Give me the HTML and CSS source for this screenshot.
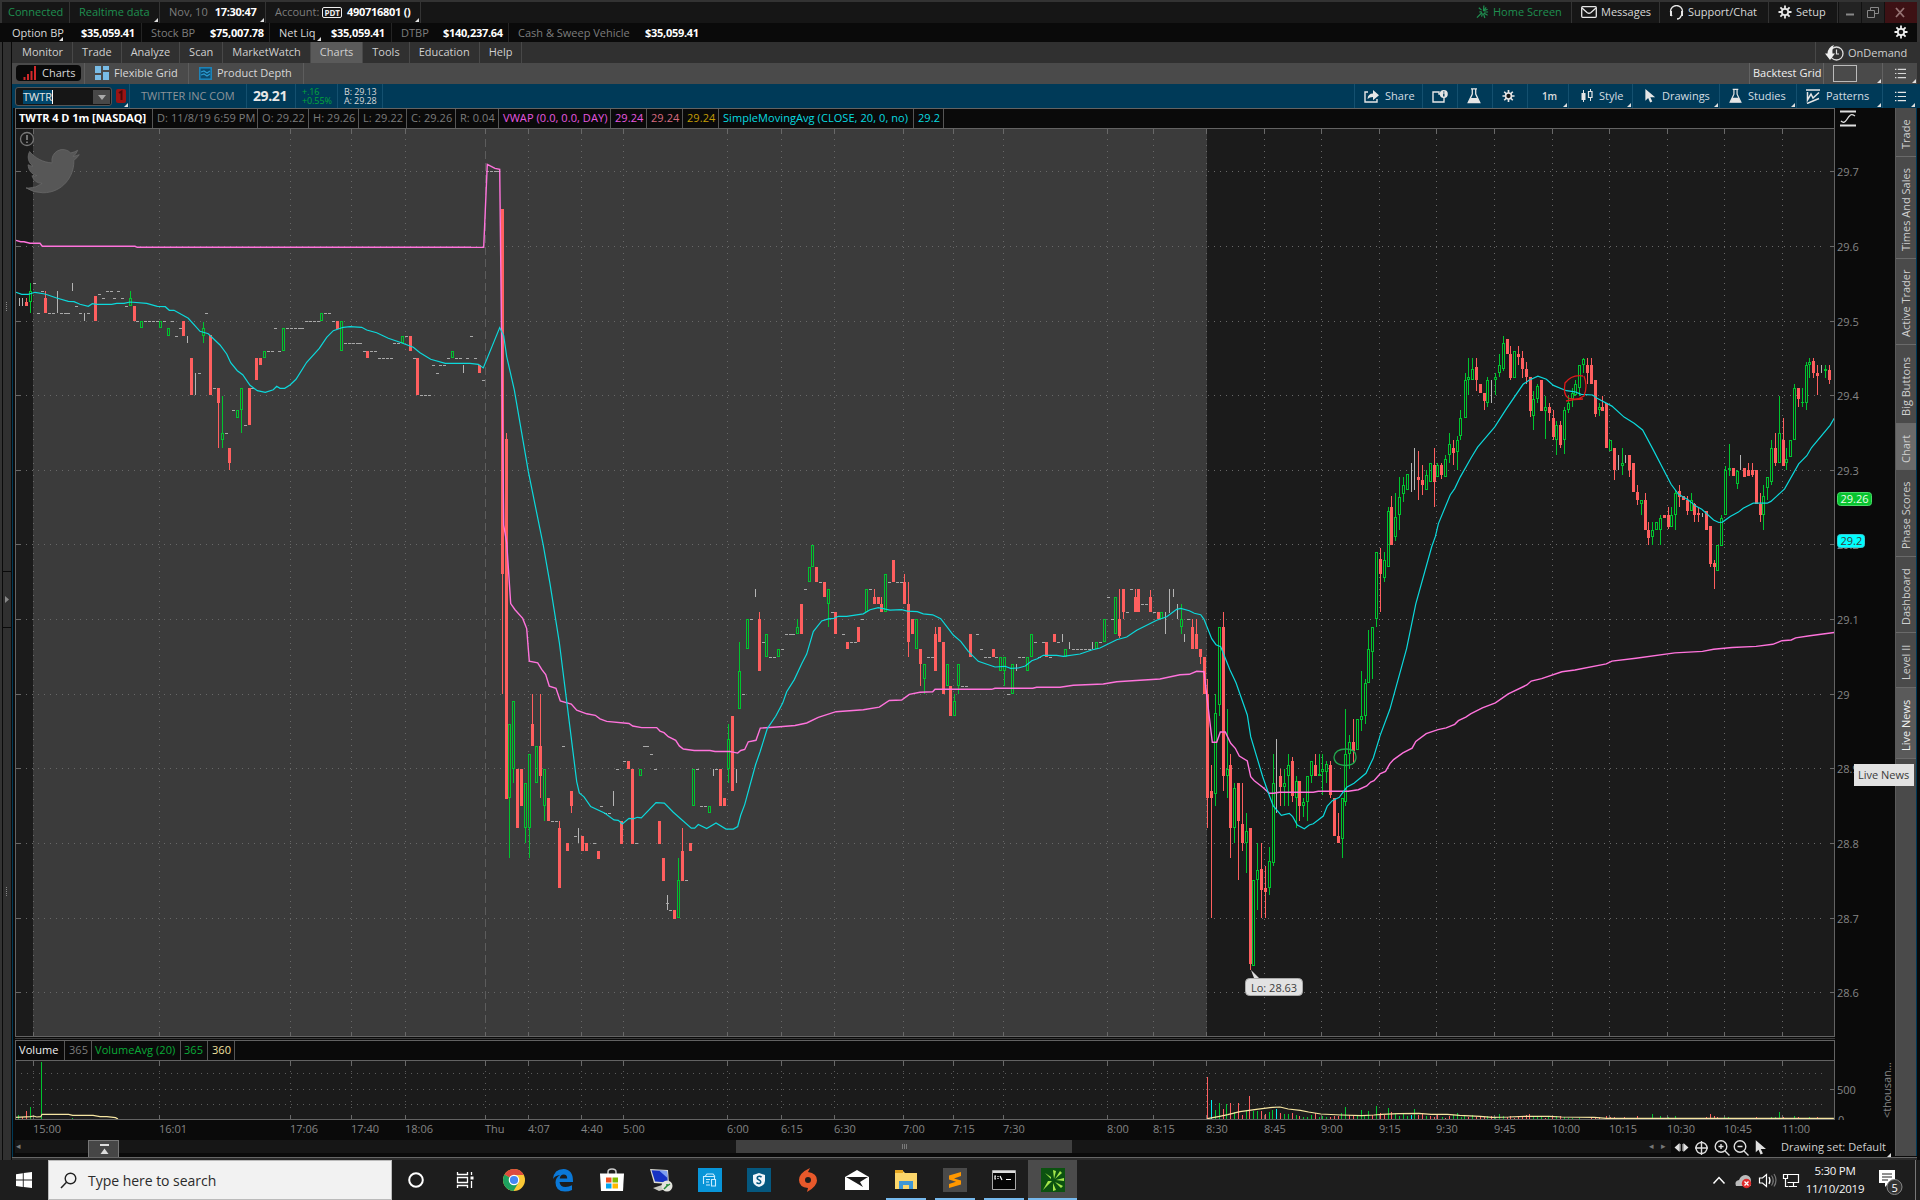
FILE: index.html
```html
<!DOCTYPE html>
<html lang="en">
<head>
<meta charset="utf-8">
<title>Charts - TWTR</title>
<link rel="stylesheet" href="styles.css">
</head>
<body>
<svg class="defs" width="0" height="0">
  <symbol id="gear" viewBox="0 0 14 14"><g stroke="currentColor" stroke-width="1.800"><path d="M7 .5v13M.5 7h13M2.400 2.400l9.200 9.200M11.600 2.400l-9.200 9.200"/></g><circle cx="7" cy="7" r="4" fill="currentColor"/><circle class="hole" cx="7" cy="7" r="2.300"/></symbol>
  <symbol id="flask" viewBox="0 0 14 16"><path d="M4 .8h6M5.300 1v5L1.200 14.600h11.600L8.700 6V1" fill="none" stroke="currentColor" stroke-width="1.300"/><path d="M3.600 10h6.800l2.200 4.600H1.400z" fill="currentColor"/></symbol>
  <symbol id="list" viewBox="0 0 12 12"><path d="M0 1.500h1.500M3 1.500h9M0 6h1.500M3 6h9M0 10.500h1.500M3 10.500h9" stroke="currentColor" stroke-width="1.200"/></symbol>
  <symbol id="pointer" viewBox="0 0 11 15"><path d="M0 0v12.500l3-2.800 2.100 4.800 2.300-1-2.100-4.600H10.500z" fill="currentColor"/></symbol>
  <symbol id="burst" viewBox="0 0 14 14"><path d="M8 6L8.500 0M8 6l3-4M8 6l4.500-2M9 7h4M8.500 8l4 2.500M8 8.500l1.500 5M7 8.500L6 12M6.500 7.500L1 13M6 6.500L3.500 7M6 5L3 2.500" fill="none" stroke="currentColor" stroke-width="1.300"/></symbol>
</svg>
<div class="app">
  <header class="bar status">
    <span class="cell green" style="width:68px">Connected</span>
    <span class="cell green corner" style="width:90px">Realtime data</span>
    <span class="cell dim corner" style="width:106px">Nov, 10 <b>17:30:47</b></span>
    <span class="cell dim corner" style="width:155px">Account: <i class="pdt">PDT</i><b>490716801 ()</b></span>
    <span class="spacer"></span>
    <span class="cell green hs" style="width:107px"><svg class="ic" width="13" height="14"><use href="#burst"/></svg>Home Screen</span>
    <span class="cell" style="width:88px"><svg class="ic" width="16" height="12" viewBox="0 0 16 12"><rect x=".7" y=".7" width="14.600" height="10.600" rx="1" fill="none" stroke="#e6e6e6" stroke-width="1.300"/><path d="M1 2l5 4.500q2 1.500 4 0L15 2" fill="none" stroke="#e6e6e6" stroke-width="1.300"/></svg>Messages</span>
    <span class="cell" style="width:109px"><svg class="ic" width="15" height="15" viewBox="0 0 15 15"><path d="M3 11Q1.500 9 1.500 6.500a6 6 0 0 1 12 0Q13.500 9 12 11M12 11q-1 3-4 3" fill="none" stroke="#e6e6e6" stroke-width="1.300"/><path d="M1 6h2v5H1zM12 6h2v5h-2z" fill="#e6e6e6"/></svg>Support/Chat</span>
    <span class="cell" style="width:69px"><svg class="ic" width="14" height="14"><use href="#gear"/></svg>Setup</span>
    <span class="win"><svg width="22" height="21"><path d="M7 12.500h8" stroke="#888" stroke-width="2"/></svg></span>
    <span class="win"><svg width="22" height="21"><path d="M5.500 8.500h7v7h-7zM8.500 8V5.500h8v6H13" fill="none" stroke="#888"/></svg></span>
    <span class="win close"><svg width="32" height="21"><path d="M11 6l8 9M19 6l-8 9" stroke="#957373" stroke-width="1.800"/></svg></span>
  </header>
  <div class="bar balance">
    <span class="cell corner2" style="width:139px"><em style="width:69px">Option BP</em><b>$35,059.41</b></span>
    <span class="cell dim" style="width:128px"><em style="width:59px">Stock BP</em><b>$75,007.78</b></span>
    <span class="cell corner2" style="width:122px"><em style="width:52px">Net Liq</em><b>$35,059.41</b></span>
    <span class="cell dim" style="width:117px"><em style="width:42px">DTBP</em><b>$140,237.64</b></span>
    <span class="cell dim last"><em style="width:127px">Cash &amp; Sweep Vehicle</em><b>$35,059.41</b></span>
    <span class="spacer"></span>
    <svg class="cog" width="14" height="14"><use href="#gear"/></svg>
  </div>
  <nav class="bar menu">
    <a>Monitor</a><a>Trade</a><a>Analyze</a><a>Scan</a><a>MarketWatch</a><a class="on">Charts</a><a>Tools</a><a>Education</a><a>Help</a>
    <span class="spacer"></span>
    <span class="demand"><svg width="19" height="16" viewBox="0 0 19 16"><circle cx="11.500" cy="8.500" r="6.500" fill="none" stroke="#ddd" stroke-width="1.300"/><path d="M11.500 4.500V9H14" fill="none" stroke="#ddd" stroke-width="1.200"/><path d="M9 0Q3 2 2.500 8.500H0L5 15l5-6.500H7.500Q7 3 9 0z" fill="#eee"/></svg>OnDemand</span>
  </nav>
  <nav class="bar sub">
    <span class="pilltab"><span class="pill"><svg width="14" height="14" viewBox="0 0 14 14"><path d="M1.500 14v-3M5 14V8M8.500 14V5M12 14V0" stroke="#d2282a" stroke-width="2"/></svg>Charts</span></span>
    <span class="subtab" style="width:104px"><svg width="14" height="14" viewBox="0 0 14 14"><path d="M0 0h6v7H0zM0 9h6v5H0zM8 0h6v4H8zM8 6h6v8H8z" fill="#79bce6"/></svg>Flexible Grid</span>
    <span class="subtab pd" style="width:115px"><svg width="13" height="13" viewBox="0 0 13 13"><rect x=".8" y=".8" width="11.400" height="11.400" fill="#0c4a6d" stroke="#1d83b8" stroke-width="1.600"/><path d="M2 5l3-1 3 2 3-2M2 8l3-1 3 2 3-2" fill="none" stroke="#2b9ad0" stroke-width="1.300"/></svg>Product Depth</span>
    <span class="spacer"></span>
    <span class="grid-name">Backtest Grid</span>
    <span class="grid-box corner"><svg width="24" height="17"><rect x=".5" y=".5" width="23" height="16" fill="none" stroke="#bbb"/></svg></span>
    <span class="grid-list corner"><svg width="11" height="11"><use href="#list"/></svg></span>
  </nav>
  <div class="bar symbol">
    <span class="sym"><i>TWTR</i><s></s></span>
    <span class="link corner"><svg width="10" height="14"><rect width="10" height="14" rx="2" fill="#9a1414"/><path d="M3 4l2.500-1.500V11" fill="none" stroke="#4a0808" stroke-width="2"/></svg></span>
    <span class="q name" style="width:117px">TWITTER INC COM</span>
    <span class="q last" style="width:49px">29.21</span>
    <span class="q two up" style="width:42px">+.16<br>+0.55%</span>
    <span class="q two" style="width:45px">B: 29.13<br>A: 29.28</span>
    <span class="spacer"></span>
    <span class="t" style="width:68px"><svg width="15" height="13" viewBox="0 0 15 13"><path d="M4 2H1v10h12V9" fill="none" stroke="#e6e6e6" stroke-width="1.400"/><path d="M3.500 9Q4 3.500 9 3.500V0l6 5.300-6 5V7Q5.500 7 3.500 9z" fill="#e6e6e6"/></svg>Share</span>
    <span class="t" style="width:35px"><svg width="16" height="13" viewBox="0 0 16 13"><path d="M1 2h6v2h5v8H1z" fill="none" stroke="#e6e6e6" stroke-width="1.400"/><circle cx="11.800" cy="4" r="4" fill="#e6e6e6"/><path d="M11.800 1.500v1M11.800 3.500v3" stroke="#003a58" stroke-width="1.400"/></svg></span>
    <span class="t" style="width:35px"><svg width="14" height="16"><use href="#flask"/></svg></span>
    <span class="t" style="width:35px"><svg width="13" height="14"><use href="#gear"/></svg></span>
    <span class="t corner m1" style="width:41px"><b>1m</b></span>
    <span class="t corner st" style="width:64px"><svg width="12" height="14" viewBox="0 0 12 14"><path d="M2.500 1v12M9.500 0v2M9.500 9v3" stroke="#e6e6e6"/><path d="M.5 4h4v7h-4z" fill="#e6e6e6"/><path d="M7.500 2.500h3.500v6H7.500z" fill="none" stroke="#e6e6e6" stroke-width="1.200"/></svg>Style</span>
    <span class="t corner" style="width:87px;padding-left:12px"><svg width="11" height="14"><use href="#pointer"/></svg>Drawings</span>
    <span class="t corner" style="width:77px"><svg width="13" height="16"><use href="#flask"/></svg>Studies</span>
    <span class="t corner" style="width:86px"><svg width="14" height="15" viewBox="0 0 14 15"><path d="M0 1h14M1.500 3v8L5 5l2 4 6-5.500M1 14.500l12-5" fill="none" stroke="#e6e6e6" stroke-width="1.500"/></svg>Patterns</span>
    <span class="t corner" style="width:34px;padding-left:12px"><svg width="11" height="11"><use href="#list"/></svg></span>
  </div>
  <main class="work">
    <div class="gutter"><svg width="11" height="1050"><path d="M3 463.500h8M3 519.500h8" stroke="#0a0a0a"/><path d="M5 488l4 3.500-4 3.500z" fill="#888"/><path d="M6.500 194v9M6.500 779v9" stroke="#888" stroke-dasharray="1 1"/></svg></div>
    <section class="chart">
      <div class="studies">
        <div class="labels">
          <b style="width:137px">TWTR 4 D 1m [NASDAQ]</b><span style="width:105px">D: 11/8/19 6:59 PM</span><span style="width:51px">O: 29.22</span><span style="width:50px">H: 29.26</span><span style="width:48px">L: 29.22</span><span style="width:49px">C: 29.26</span><span style="width:43px">R: 0.04</span><span class="mag" style="width:112px">VWAP (0.0, 0.0, DAY)</span><span class="mag" style="width:36px">29.24</span><span class="pink" style="width:36px">29.24</span><span class="gold" style="width:36px">29.24</span><span class="cy" style="width:195px">SimpleMovingAvg (CLOSE, 20, 0, no)</span><span class="cy" style="width:30px">29.2</span>
        </div>
        <svg class="scale" width="16" height="17" viewBox="0 0 16 17"><path d="M0 1.500h16M0 15.500h16" stroke="#e0e0e0" stroke-width="2"/><path d="M1 11q3 3 5.500-1t4-5 4.500 1" fill="none" stroke="#ddd" stroke-width="1.300"/></svg>
      </div>
      <svg class="plot" width="1880" height="912" viewBox="15 128 1880 912">
        <rect x="15" y="128" width="1820" height="909" fill="#1b1b1b"/>
        <rect x="33" y="128" width="1174" height="909" fill="#3b3b3b"/>
        <g id="price-grid"></g>
        <g class="mark"><circle cx="27" cy="139" r="6.500" fill="none" stroke="#777" stroke-width="1.300"/><path d="M27 135v5M27 141.500v1.500" stroke="#888" stroke-width="1.600"/></g>
        <path transform="translate(26 144.500) scale(2.220)" fill="#575757" stroke="#696969" stroke-width=".35" d="M23.953 4.570a10 10 0 01-2.825.775 4.958 4.958 0 002.163-2.723c-.951.555-2.005.959-3.127 1.184a4.920 4.920 0 00-8.384 4.482C7.690 8.095 4.067 6.130 1.640 3.162a4.822 4.822 0 00-.666 2.475c0 1.710.870 3.213 2.188 4.096a4.904 4.904 0 01-2.228-.616v.060a4.923 4.923 0 003.946 4.827 4.996 4.996 0 01-2.212.085 4.936 4.936 0 004.604 3.417 9.867 9.867 0 01-6.102 2.105c-.390 0-.779-.023-1.170-.067a13.995 13.995 0 007.557 2.209c9.053 0 13.998-7.496 13.998-13.985 0-.210 0-.420-.015-.630A9.935 9.935 0 0024 4.590z"/>
        <g id="candles" shape-rendering="crispEdges"></g>
        <g id="overlays"></g>
        <path d="M1334 757q1-8 12-8 10 0 10 8 0 8-10 8.500-12-.5-12-8.500" fill="none" stroke="#22a84f" stroke-width="1.300"/>
        <path d="M1583 376q-11-2-18 7-2 12 3 15 9 3 16-2 4-10 0-20M1566 401q8-2 17-2" fill="none" stroke="#e01a1a" stroke-width="1.300"/>
        <path d="M1251 970l3 8h5z" fill="#ddd"/>
        <rect x="1245.500" y="978.500" width="57" height="17" rx="4" fill="#e2e2e2" stroke="#aaa"/>
        <text x="1251" y="992" class="lo">Lo: 28.63</text>
        <path d="M15.500 128v909M1834.500 128v909M15 128.500h1820M15 1036.500h1820" stroke="#636363"/>
        <path d="M15 1038.500h1820" stroke="#3a3a3a"/>
        <g id="price-labels"></g>
        <rect x="1837.500" y="492.500" width="34" height="13" rx="3" fill="#07c42f" stroke="#49d968"/><text x="1840.500" y="503" class="tagw">29.26</text>
        <rect x="1837.500" y="534.500" width="27" height="13" rx="3" fill="#00ffff" stroke="#35c9d0"/><text x="1840.500" y="545" class="tagd">29.2</text>
      </svg>
      <div class="studies vol">
        <div class="labels"><span class="wh" style="width:49px">Volume</span><span style="width:27px">365</span><span class="gr" style="width:89px">VolumeAvg (20)</span><span class="gr" style="width:27px">365</span><span class="cream" style="width:27px">360</span></div>
      </div>
      <svg class="plot" width="1880" height="80" viewBox="15 1060 1880 80">
        <rect x="15" y="1060" width="1820" height="59" fill="#1b1b1b"/>
        <g id="volume-grid"></g>
        <g id="bars" shape-rendering="crispEdges"></g>
        <g id="average"></g>
        <path d="M15.500 1060v60M1834.500 1060v60M15 1060.500h1820M15 1119.500h1820" stroke="#636363"/>
        <g id="time-labels"></g>
        <text x="1837" y="1094" class="ax">500</text>
        <svg x="1836" y="1114" width="20" height="6" viewBox="1836 1114 20 6"><text x="1838" y="1124" class="ax">0</text></svg>
        <text class="ax" transform="translate(1891 1118) rotate(-90)" textLength="56">&lt;thousan...</text>
      </svg>
      <div class="scroll">
        <div class="track"><i class="arr">◂</i><i class="thumb"></i><i class="up"><svg width="9" height="11"><path d="M0 1h9" stroke="#ddd" stroke-width="2"/><path d="M4.500 4.500L8.500 10h-8z" fill="#ddd"/></svg></i><i class="arr r">◂</i><i class="arr r2">▸</i></div>
        <svg class="tools" width="96" height="17" viewBox="1673 1139 96 17"><g fill="none" stroke="#dedede" stroke-width="1.400"><path d="M1680 1143v7M1683 1143v7" stroke-width="1"/><circle cx="1701.500" cy="1147" r="5.500"/><path d="M1695 1147h13M1701.500 1140v14"/><circle cx="1721" cy="1145.500" r="5.800"/><path d="M1725 1150l4.500 4.500M1718.500 1145.500h5M1721 1143v5"/><circle cx="1740" cy="1145.500" r="5.800"/><path d="M1744 1150l4.500 4.500M1737.500 1145.500h5"/></g><path d="M1674.500 1146.500l5-4.500v9zM1688.500 1146.500l-5-4.500v9z" fill="#dedede"/><use href="#pointer" x="1755.500" y="1139" width="11" height="15"/></svg>
        <span class="dset">Drawing set: Default</span>
      </div>
      <div class="foot"></div>
    </section>
    <aside class="side">
      <a style="height:49px">Trade</a><a style="height:102px">Times And Sales</a><a style="height:86px">Active Trader</a><a style="height:79px">Big Buttons</a><a class="on" style="height:46px">Chart</a><a style="height:87px">Phase Scores</a><a style="height:76px">Dashboard</a><a style="height:55px">Level II</a><a class="hot" style="height:71px">Live News</a>
    </aside>
    <div class="tip">Live News</div>
  </main>
  <footer class="task">
    <svg class="start" width="16" height="16" viewBox="0 0 16 16"><path d="M0 2.200l6.800-1v6.400H0zM7.700 1.100L16 0v7.600H7.700zM0 8.500h6.800v6.400L0 14zM7.700 8.500H16V16l-8.300-1.100z" fill="#fff"/></svg>
    <div class="search"><svg width="17" height="17" viewBox="0 0 17 17"><circle cx="10.500" cy="6.500" r="5.300" fill="none" stroke="#222" stroke-width="1.400"/><path d="M6.500 10.300L1 16" stroke="#222" stroke-width="1.500"/></svg>Type here to search</div>
    <div class="apps">
      <span><svg width="24" height="24"><circle cx="12" cy="12" r="6.800" fill="none" stroke="#fff" stroke-width="2"/></svg></span>
      <span><svg width="24" height="24"><path d="M4.500 4v2.500h10V4M4.500 20v-2.500h10V20M4.500 9.500h10v5h-10zM18.500 4v3M18.500 13v7" fill="none" stroke="#fff" stroke-width="1.300"/><path d="M17.500 8.500h3v3h-3z" fill="#fff"/></svg></span>
      <span class="ch"><svg width="24" height="24" viewBox="0 0 24 24"><circle cx="12" cy="12" r="11" fill="#fbc835"/><path d="M12 12L2.500 6.500A11 11 0 0 1 21.800 7H12z" fill="#dd4b3e"/><path d="M12 12l4.500 2.500L11.500 23A11 11 0 0 1 2.500 6.500z" fill="#1da15f"/><circle cx="12" cy="12" r="5.300" fill="#fff"/><circle cx="12" cy="12" r="4.100" fill="#4587f3"/></svg></span>
      <span><svg width="22" height="24" viewBox="0 0 22 24"><path d="M1 11Q2 1 11.500 1 21 1.500 21 13v1H7.500q.5 5 6 5 3.500 0 6.500-1.700V22q-3 1.500-7 1.500-9.500 0-9.500-9Q3.500 9.500 8 7 3 7.500 1 11zM7.700 10.500h7.500q0-4-3.500-4-3.300 0-4 4z" fill="#0a78d7"/></svg></span>
      <span><svg width="24" height="24" viewBox="0 0 24 24"><path d="M8 6V4q0-3 4-3t4 3v2" fill="none" stroke="#ccc" stroke-width="1.500"/><path d="M0 5.500h24L23 23H1z" fill="#fff"/><path d="M6 9.500h5.500v5H6z" fill="#f25022"/><path d="M12.500 9.500H18v5h-5.500z" fill="#7fba00"/><path d="M6 15.500h5.500v5H6z" fill="#00a4ef"/><path d="M12.500 15.500H18v5h-5.500z" fill="#ffb900"/></svg></span>
      <span><svg width="24" height="24" viewBox="0 0 24 24"><path d="M1 1l18 1 1 14-15-1z" fill="#dcdcd4"/><path d="M2.500 2.200L18 3l.8 11.500L6 13.500z" fill="#1733c4"/><path d="M10 2.600l8 .4.500 7z" fill="#7d9df0"/><path d="M4 20l9-3 4 4-7 2z" fill="#c8c8c0"/><circle cx="18" cy="18" r="5.500" fill="#e3e3dd"/><path d="M15 21l3-3v-2M18 18l3-2" fill="none" stroke="#248a36" stroke-width="1.500"/></svg></span>
      <span><svg width="24" height="24" viewBox="0 0 24 24"><path d="M0 0h24v24H0z" fill="#0895d8"/><path d="M7 8.500L9 6h6l2 2.500M5.500 16V8.500h11v3M8 11.500h4M8 14h3M8 17h4M13.500 11.500h4v6.500h-4z" fill="none" stroke="#c8ecff" stroke-width="1.100"/></svg></span>
      <span><svg width="24" height="24" viewBox="0 0 24 24"><path d="M0 0h24v24H0z" fill="#05587f"/><path d="M12 5l6 2v6q0 4-6 6-6-2-6-6V7z" fill="#f0f6fa"/><path d="M14.500 9.300q-1-1.300-3-.8-2 .8-1 2.500l2.500 1.500q1.500 1.500 0 2.700-2 .9-3.500-.7" fill="none" stroke="#05587f" stroke-width="1.500"/></svg></span>
      <span><svg width="20" height="24" viewBox="0 0 20 24"><path d="M12 0l-2 4q9 1 9 8.500 0 6-10 11.500l1-4Q1 19 1 12 1 5 12 0z" fill="#e8592b"/><circle cx="10" cy="12" r="3" fill="#1e1e1e"/></svg></span>
      <span><svg width="24" height="20" viewBox="0 0 24 20"><path d="M0 7l12-7 12 7v13H0z" fill="#fff"/><path d="M1 7h22l-8 5 3 5-5-3z" fill="#1b1b1b"/></svg></span>
      <span class="run"><svg width="24" height="22" viewBox="0 0 24 22"><path d="M1 2h8l2 2h12v16H1z" fill="#fbd66b"/><path d="M1 1h8v3H1z" fill="#e6a620"/><path d="M5 12h14v8h-4v-4h-6v4H5z" fill="#3f97d6"/></svg></span>
      <span class="run"><svg width="24" height="24" viewBox="0 0 24 24"><path d="M0 0h24v24H0z" fill="#4a4a4a"/><path d="M6 7.500L18 4v4l-7 2.500 7 2V16.500L6 20v-4l7-2.300-7-2.200z" fill="#ff9800"/></svg></span>
      <span class="run"><svg width="24" height="20" viewBox="0 0 24 20"><path d="M.5.500h23v19H.5z" fill="#050505" stroke="#aaa"/><path d="M1 1h22v2H1z" fill="#ddd"/><path d="M4 6H3v3h1M6 6v1M6 8v1M8 6l2 4M14 9.500h5" fill="none" stroke="#fff" stroke-width="1.200"/></svg></span>
      <span class="run act"><svg width="24" height="24" viewBox="0 0 24 24"><path d="M0 0h24v24H0z" fill="#0c5210"/><path d="M13 11L12 2l3 1zM14 11l5-8 2 2zM15 12l8-2v3zM14 14l8 4-2 2zM12 15l3 7-3 1zM11 13L2 22l5-9zM10 11L4 5l6 4z" fill="#a5e84b"/></svg></span>
    </div>
    <span class="spacer"></span>
    <svg class="tray" width="96" height="24" viewBox="1712 1168 96 24"><path d="M1713.500 1183.500l5.500-6 5.500 6" fill="none" stroke="#fff" stroke-width="1.500"/><path d="M1736 1186q-2-5 3-6 2-5 7-5 5 1 5 6v5z" fill="#bbb"/><circle cx="1746.500" cy="1183.500" r="4.700" fill="#e02b2b"/><path d="M1744.500 1181.500l4 4M1748.500 1181.500l-4 4" stroke="#fff" stroke-width="1.300"/><path d="M1759.500 1178h3l4-3.500v12l-4-3.500h-3z" fill="none" stroke="#fff" stroke-width="1.200"/><path d="M1769 1177q2 3.500 0 7" fill="none" stroke="#fff" stroke-width="1.200"/><path d="M1771.500 1175.500q3.500 5 0 10M1774 1174q4 6 0 12.500" fill="none" stroke="#777" stroke-width="1.200"/><path d="M1787.500 1174.500h11v8h-11M1783.500 1174.500h4v4h-4zM1785.500 1178v8.500h3M1793.500 1183v3M1789 1186.500h8" fill="none" stroke="#fff" stroke-width="1.200"/></svg>
    <div class="clock">5:30 PM<br>11/10/2019</div>
    <svg class="note" width="24" height="26" viewBox="0 0 24 26"><path d="M0 0h16v13h-6l-4 4v-4H0z" fill="#fff"/><path d="M3 4h10M3 7h10M3 10h6" stroke="#222"/><circle cx="15.500" cy="17" r="7.500" fill="#333" stroke="#888"/><text x="12.600" y="21.500" class="n5">5</text></svg>
    <i class="desk"></i>
  </footer>
</div>
<script src="chart.js"></script>
</body>
</html>
```
FILE: styles.css
```css
* { box-sizing: border-box; }
html, body { margin: 0; background: #0a0a0a; }
body { width: 1920px; height: 1200px; overflow: hidden; font: 11px/14px "Open Sans", "Noto Sans", sans-serif; color: #d8d8d8; }
i, em { font-style: normal; }
.defs { position: absolute; }
.app { display: flex; flex-direction: column; height: 1200px; }
.bar { display: flex; align-items: stretch; flex: none; white-space: nowrap; }
.spacer { flex: 1; }
.green { color: #1f8f50; }
.dim { color: #7d7d7d; }
b { color: #fff; letter-spacing: -.28px; }
.corner, .corner2 { position: relative; }
.corner::after, .corner2::after, .dset::after { content: ""; position: absolute; right: 1px; bottom: 1px; border: 2px solid; border-color: transparent #e0e0e0 #e0e0e0 transparent; }
.corner2::after { left: 47px; right: auto; }
.balance .corner2:nth-child(1)::after { left: 56px; }

.status { height: 23px; background: #161616; border: solid #333; border-width: 2px 3px 0 2px; }
.cell { display: flex; align-items: center; flex: none; border-right: 1px solid #333; }
.status .cell { padding-left: 9px; padding-bottom: 1px; }
.status .cell:first-child { padding-left: 6px; }
.status .cell b { margin-left: 7px; }
.status .cell i + b { margin-left: 5px; }
.pdt { border: 1px solid #eee; border-radius: 2px; color: #eee; font-size: 8px; font-weight: bold; line-height: 9px; padding: 0 1px; margin-left: 3px; }
.ic { margin-right: 4px; flex: none; color: #e6e6e6; }
.hs .ic { color: #1f8f50; margin-left: 2px; }
.hole { fill: #161616; }
.win { width: 23px; flex: none; background: #232323; border-left: 1px solid #111; }
.win.close { width: 33px; background: #3d1114; }
.win svg { display: block; }

.balance { height: 19px; background: #0a0a0a; padding-left: 3px; border-right: 3px solid #333; }
.balance .cell { padding-left: 9px; border-color: #242424; }
.balance .cell.last { border: 0; }
.balance em { flex: none; }
.cog { margin: 2px 9px 0 0; color: #f0f0f0; }

.menu, .sub, .symbol { background-image: linear-gradient(90deg, #333 2px, #0a0a0a 2px 3px, #303030 3px 11px, #0a0a0a 11px 12px); background-size: 12px 100%; background-repeat: no-repeat; }
.menu { height: 21px; background-color: #303030; padding-left: 12px; border-right: 3px solid #303030; color: #cfcfcf; }
.menu a { padding: 3px 9px; border-right: 1px solid #484848; }
.menu a:first-child { padding-left: 10px; }
.menu a.on { background: #5a5a5a; }
.demand { display: flex; align-items: center; gap: 4px; width: 102px; padding-left: 9px; border-left: 1px solid #484848; }

.sub { height: 21px; background-color: #4a4a4a; padding-left: 12px; border-right: 3px solid #303030; }
.pilltab { width: 73px; border-right: 1px solid #5d5d5d; padding: 2px 0 0 4px; }
.pill { display: flex; align-items: center; width: 65px; height: 16px; border-radius: 4px; background: #090909; padding-left: 7px; gap: 5px; }
.subtab { display: flex; align-items: center; padding: 0 0 1px 10px; gap: 5px; border-right: 1px solid #5d5d5d; }
.grid-name { width: 75px; padding: 3px 0 0 3px; border: solid #626262; border-width: 0 1px; color: #efefef; }
.grid-box { width: 59px; padding: 2px 0 0 9px; border-right: 1px solid #626262; }
.grid-list { width: 34px; padding: 5px 0 0 12px; }

.symbol { height: 24px; background-color: #003a58; padding: 0 4px 0 15px; }
.sym { display: flex; width: 97px; height: 19px; margin-top: 3px; background: #161616; border: 1px solid #555; border-radius: 3px; padding: 2px 1px 1px 7px; justify-content: space-between; }
.sym i { background: #00466b; border-right: 1px solid #fff; height: 14px; color: #e6e6e6; }
.sym s { width: 17px; background: #484848; display: flex; }
.sym s::before { content: ""; margin: 5px 5px; border: 4px solid transparent; border-top: 5px solid #aaa; border-bottom: 0; }
.link { width: 18px; padding: 5px 0 0 4px; border-right: 1px solid #14506f; }
.q { display: flex; align-items: center; flex: none; border-right: 1px solid #14506f; padding-left: 7px; }
.name { padding-left: 11px; color: #8d9499; }
.q.last { font: bold 14px/20px "Open Sans", sans-serif; color: #e8e8e8; letter-spacing: -.4px; padding-left: 6px; }
.q.two { font-size: 9px; line-height: 9px; letter-spacing: -.1px; padding-left: 6px; }
.q.up { color: #05a63a; }
.t { display: flex; align-items: center; gap: 6px; flex: none; border-left: 1px solid #14506f; padding-left: 9px; color: #d4dde2; }
.t svg { color: #e6e6e6; }
.t .hole { fill: #003a58; }
.m1 { padding-left: 14px; font-size: 10px; }
.m1 b { color: #ddd; font-weight: 600; }
.st { padding-left: 12px; }

.work { display: flex; height: 1052px; flex: none; position: relative; }
.gutter { width: 15px; background: linear-gradient(90deg, #333 2px, #0a0a0a 2px 3px, #303030 3px 11px, #0a0a0a 11px 12px, #003a58 12px 13px, #0a0a0a 13px); }
.chart { width: 1880px; display: flex; flex-direction: column; }
.studies { display: flex; height: 20px; flex: none; }
.labels { display: flex; width: 1820px; border: 1px solid #636363; border-bottom: 0; color: #7c7c7c; white-space: nowrap; letter-spacing: .07px; }
.labels > * { border-right: 1px solid #555; padding: 2px 0 0 4px; flex: none; }
.labels b { letter-spacing: -.04px; padding-left: 3px; }
.labels .wh, .labels .gr { padding-left: 3px; }
.scale { margin: 2px 0 0 5px; }
.mag { color: #e858e0; } .pink { color: #d86b80; } .gold { color: #c39c05; } .cy { color: #08dbe0; } .wh { color: #f0f0f0; } .gr { color: #0aab38; } .cream { color: #f2e2a0; }
.plot { display: block; flex: none; }
.ax { fill: #858585; font-size: 11px; }
.lo, .tagd { fill: #3c3c3c; font-size: 11px; }
.tagw { fill: #e8ffe8; font-size: 11px; }

.scroll { display: flex; height: 17px; }
.track { position: relative; width: 1656px; height: 13px; background: #161616; }
.arr { position: absolute; left: 1px; top: -1px; color: #777; font-size: 9px; }
.arr.r { left: 1634px; } .arr.r2 { left: 1646px; }
.thumb { position: absolute; left: 721px; width: 336px; height: 13px; background: #404040; }
.thumb::after { content: ""; position: absolute; left: 166px; top: 4px; width: 5px; height: 5px; background: repeating-linear-gradient(90deg, #7a7a7a 0 1px, transparent 1px 2px); }
.track .up { position: absolute; left: 73px; width: 31px; height: 17px; background: #464646; border: 1px solid #777; border-bottom: 0; padding: 3px 0 0 11px; line-height: 0; }
.tools { margin-left: 2px; color: #dedede; }
.dset { position: relative; width: 126px; padding-left: 12px; white-space: nowrap; color: #d0d0d0; letter-spacing: .05px; }
.dset::after { right: 4px; bottom: 0; }
.foot { height: 3px; margin-left: -3px; width: 1905px; border-top: 1px solid #666; background: #2b2b2b; }

.side { display: flex; flex-direction: column; width: 22px; height: 1048px; background: #4a4a4a; border-right: 1px solid #003a58; border-left: 1px solid #5b5b5b; }
.side a { display: flex; align-items: center; justify-content: center; writing-mode: vertical-rl; transform: rotate(180deg); width: 20px; border-top: 1px solid #6a6a6a; padding-bottom: 4px; color: #cfcfcf; flex: none; }
.side .on { background: #6b6b6b; }
.side .hot { background: #5a5a5a; color: #f0f0f0; }
.tip { position: absolute; left: 1854px; top: 656px; width: 60px; height: 22px; background: #e2e2e2; color: #3b3b3b; padding: 4px; white-space: nowrap; }

.task { display: flex; align-items: center; height: 40px; background: #1d1d1d; }
.start { margin: 0 16px; flex: none; }
.search { display: flex; align-items: center; gap: 11px; width: 344px; height: 40px; background: #f2f2f2; border: 1px solid #bbb; padding: 1px 0 0 11px; color: #2b2b2b; font-size: 14px; letter-spacing: -.03px; }
.apps { display: flex; height: 40px; margin-left: -1px; }
.apps span { width: 49px; display: flex; align-items: center; justify-content: center; }
.apps .run { background: linear-gradient(#76b9ed, #76b9ed) 50% 100%/40px 2px no-repeat; }
.apps .act { background: linear-gradient(#76b9ed, #76b9ed) 0 100%/49px 2px no-repeat, #4b4b4b; }
.tray { margin-right: -5px; }
.clock { width: 64px; text-align: center; font-size: 11.500px; line-height: 18px; letter-spacing: -.25px; color: #f5f5f5; }
.note { margin: 6px 0 0 12px; }
.n5 { fill: #fff; font-size: 11px; }
.desk { width: 1px; height: 40px; background: #777; margin: 0 4px 0 12px; }
```
FILE: chart.js
```js
const NS = 'http://www.w3.org/2000/svg';
const add = (id, tag, attrs, text) => {
  const e = document.createElementNS(NS, tag);
  for (const k in attrs) e.setAttribute(k, attrs[k]);
  if (text) e.textContent = text;
  document.getElementById(id).appendChild(e);
};
const COLOR = { r: '#ff5f5f', g: '#00c42f', w: '#b4b4b4', c: '#00f0f0' };

// Session segments. Each has an origin, a scale, and its own bar and line records.
// r/g: x bodyTop bodyBottom [high low]   w: x high low   d: y x x x ...
const segments = [
{ x: 0, y: 200, sx: 3, sy: 3,
  bars: 'w 58 294 320;w 67 294 320;r 79 306 320 296 320;g 91 274 307 250 340;d 250 103;d 340 115 148 160 184 196 206 241 265 619 976 988;d 274 127 322 334 355;r 136 294 341 274 341;w 172 274 340;w 217 250 275;d 319 229 379;w 253 340 365;r 286 289 365;d 283 298;d 295 310 343 367;g 391 295 320 274 320;r 403 319 365;d 364 412 436 448 460 472 493 517 919 931 943 955 1000;g 424 364 386;g 481 364 386;g 505 385 410;d 409 529 1219 1414;d 385 541 826 862 874 886 897 907;r 550 364 410;w 562 409 430;r 574 475 587;w 586 520 585;d 520 598 1312;g 610 385 410 366 430;r 631 407 587;d 565 643 757;r 655 565 611 565 745;g 667 700 722 588 745;d 700 679;r 688 745 791 745 810;d 631 700;g 712 631 656;g 724 565 631 565 700;d 676 736;r 748 565 677;r 769 475 542;r 781 475 497;g 793 454 475;d 454 805 817 838 1093 1114 1126;g 850 385 455;g 964 340 364;r 1012 364 388;g 1024 364 455;d 430 1036 1048 1060 1072 1082 1183 1195;r 1102 454 476;d 475 1138 1150 1162 1174 1243 1345 1369 1381 1402 1426;g 1207 409 430;r 1231 409 455;r 1252 475 587;d 586 1264 1276 1288;d 496 1300 1321 1333;g 1357 454 475;w 1390 496 520;r 1438 496 521',
  sma: '48,277 65,283 85,283 105,277 135,282 170,294 205,304 222,305 240,313 265,319 277,311 290,313 335,313 350,310 372,310 390,306 440,310 472,319 496,320 508,331 522,331 565,355 600,394 625,401 660,435 680,462 692,488 712,512 728,524 750,556 772,572 796,577 820,569 830,559 840,565 854,565 870,555 888,538 920,487 958,445 980,412 1000,392 1030,382 1050,380 1085,382 1100,390 1130,398 1165,415 1200,427 1240,442 1260,458 1292,478 1336,490 1410,490',
  vwap: '48,121 62,125 72,125 90,130 120,130 127,139 405,139 412,142 1410,142' },
{ x: 470, y: 150, sx: 3, sy: 1.96,
  bars: 'd 366 4;d 409 16;r 28 422 438;d 452 40;d 42 52 64 76 86;r 97 116 832 116 1067;r 109 568 1272 555 1272;g 118 1126 1271 1126 1388;g 130 1080 1214 1080 1242;r 142 1214 1330;r 154 1214 1287;g 166 1242 1330 1242 1358;g 178 1185 1330 1185 1388;r 187 1125 1169 1067 1169;g 199 1169 1242;r 211 1168 1228 1067 1270;g 223 1214 1287 1214 1315;r 235 1270 1316;d 1316 247 259;r 268 1329 1447 1316 1447;d 1169 280 523 532;r 292 1358 1375;r 304 1256 1287 1256 1300;d 1346 316;w 325 1330 1358;r 337 1345 1375;r 349 1358 1375;d 1358 373 499;r 385 1374 1390;d 1287 394 694 706;d 1300 406 418;w 430 1256 1287;d 1214 442 556 682 740;r 454 1315 1360;d 1198 463;r 475 1198 1214;r 487 1214 1360;g 511 1214 1228;d 1185 544;r 568 1315 1360;r 580 1388 1433;w 592 1461 1491;d 1476 592;d 1491 601;r 613 1490 1507;g 625 1432 1506 1388 1506;r 637 1374 1433 1330 1433;d 1432 649;r 661 1358 1375;g 670 1214 1287;g 718 1287 1300;w 730 1214 1228;r 751 1214 1287;r 763 1270 1287;g 775 1155 1214 1126 1242;r 787 1109 1257;w 799 1214 1242;g 808 1022 1097 965 1097;d 1067 820;g 832 920 979;d 920 844 1177;w 856 861 877;r 868 920 1022 906 1022;d 965 880 1144 1156;g 889 950 995;d 995 901 913 1375 1387;g 925 979 995;d 979 937;d 950 949 961 970 1120;g 982 935 950 920 950;r 994 891 950;d 861 1006 1201;g 1018 818 848;g 1027 774 818;r 1039 818 848;d 848 1051 1258 1282 1294;r 1063 848 877;g 1075 861 891 861 935;d 906 1087;r 1096 906 950;r 1132 965 979;r 1165 935 965;g 1189 861 906;r 1213 877 891 861 891;r 1225 877 891;r 1234 891 906 877 906;g 1246 832 906;r 1270 804 848;r 1303 848 891 832 891;r 1315 891 965 848 995;r 1327 920 950;g 1339 920 979;r 1351 979 1008 979 1052;g 1363 1008 1038 1008 1066;r 1396 950 1022 935 1022;r 1408 935 965;r 1420 965 1067;g 1432 1008 1052',
  sma: '0,418 25,420 40,427 89,348 101,364 110,405 133,470 175,630 220,775 240,850 268,965 292,1090 320,1238 328,1260 342,1268 362,1287 405,1300 432,1313 445,1314 457,1321 477,1310 490,1311 502,1308 514,1309 558,1279 583,1280 610,1298 664,1329 674,1329 685,1322 710,1330 738,1319 768,1331 790,1331 803,1326 812,1304 824,1283 857,1204 870,1180 892,1134 917,1110 938,1084 950,1062 973,1038 995,1007 1010,988 1030,944 1055,923 1075,919 1092,918 1105,914 1130,914 1180,909 1200,901 1225,897 1260,902 1295,901 1312,904 1342,905 1360,909 1388,911 1411,918',
  vwap: '0,191 41,191 52,28 75,36 89,38 101,735 110,770 122,889 135,901 158,918 170,938 178,1002 203,1005 215,1018 227,1028 238,1051 258,1055 271,1080 304,1086 320,1098 350,1105 376,1108 390,1115 410,1120 477,1124 488,1129 515,1132 560,1132 570,1139 582,1142 595,1150 617,1157 628,1168 640,1174 673,1177 720,1177 735,1179 780,1179 803,1182 812,1177 824,1175 835,1160 858,1157 871,1133 920,1131 975,1128 1010,1123 1045,1112 1098,1101 1180,1097 1228,1092 1258,1079 1295,1078 1318,1067 1350,1063 1388,1062' },
{ x: 900, y: 520, sx: 3, sy: 3,
  bars: 'r 151 499 590;g 163 544 590 523 590;g 175 433 499 433 523;d 499 187 199;r 211 342 412;d 343 232;d 388 244 520 532 544 556 568;d 411 256 268 289 358 370 418 451;r 280 388 412;g 301 412 454;g 313 412 454 412 499;d 523 325;g 337 433 523;w 349 433 454;g 382 412 454;g 394 343 412;d 367 406 430 475 601;r 439 367 412;r 463 343 367;w 487 343 368;g 496 388 412;w 508 367 388;w 577 367 388;g 589 367 388;g 613 298 367;d 232 625;d 298 637 865;g 646 232 343;r 658 298 350 208 355;r 670 208 278 208 297;d 277 682 763;d 208 694;r 706 232 278 208 278;r 715 208 278;d 253 727 739;r 751 232 278 210 278;r 775 277 298;g 784 277 298;w 796 277 343;w 808 208 280;w 820 208 232;w 832 253 297;g 844 298 322 253 343;w 853 343 367;r 877 322 389 298 389;r 889 343 389 298 389;r 901 388 412 388 433;r 913 412 524;r 922 522 836 478 926;r 934 813 836 737 1195;g 946 580 823 523 858;g 958 322 556 322 590;r 970 322 770 277 814;g 982 748 770 568 835;r 991 736 926 703 1015;g 1003 804 926 790 970;r 1015 790 905 790 1081;r 1027 912 970 790 993;g 1039 934 970 880 1060;r 1051 925 1334 925 1351;g 1060 1081 1340;g 1072 1051 1081 970 1171;r 1084 1047 1112 970 1195;r 1096 1104 1118 1038 1195;g 1108 1024 1105 982 1126;g 1120 790 1031 703 1040;w 1129 658 880;r 1141 768 803 747 858;g 1153 790 802 748 858;g 1165 736 769 703 858;r 1177 724 828 712 847;g 1189 784 835 770 924;r 1198 784 860 784 904;g 1210 847 859 835 892;g 1222 769 847 769 904;g 1234 724 769 724 790;r 1246 736 770 703 770;g 1258 763 769 703 769;g 1267 748 757 703 826;g 1279 733 757 724 790;r 1291 736 827 724 836;r 1303 835 950;r 1315 948 971 880 971;g 1327 835 958 835 1015;g 1336 703 847 568 858;g 1348 667 703 645 748;r 1360 666 694 598 730;g 1372 598 691;g 1384 589 601 454 634;g 1396 490 589 478 613;g 1405 388 490 331 490;g 1417 322 397 322 478;g 1429 97 298 97 322',
  sma: '122,296 160,345 182,364 205,394 235,424 285,441 315,439 332,445 355,444 376,438 395,422 412,416 430,406 470,406 490,409 540,402 575,390 600,384 650,359 680,351 710,331 770,301 800,290 830,268 842,265 868,272 883,280 902,284 912,298 935,356 948,374 962,380 990,450 1008,488 1042,585 1052,650 1088,770 1105,818 1120,858 1144,886 1168,880 1178,890 1192,915 1213,926 1228,915 1240,911 1270,888 1282,858 1297,842 1318,832 1340,802 1362,790 1398,760 1420,714 1438,655',
  vwap: '105,508 275,508 285,505 398,505 410,502 480,502 520,496 610,492 650,485 720,481 780,477 840,464 868,463 890,454 912,455 920,525 937,667 950,667 961,636 976,636 992,670 1006,685 1018,708 1042,723 1052,770 1063,782 1088,802 1108,820 1120,820 1138,817 1240,817 1255,814 1345,814 1375,809 1400,798 1412,786 1422,782 1438,764' },
{ x: 1340, y: 320, sx: 2.7034, sy: 2.8,
  bars: 'r 109 670 713 640 818;g 120 673 723 651 735;g 131 536 692 524 692;r 138 524 632 494 632;g 150 552 608 485 620;g 161 497 547 441 590;g 171 464 487 441 510;g 183 432 476;w 193 402 483;w 202 359 478;r 212 441 450 369 504;r 223 450 464 408 492;g 233 434 478 420 478;g 245 402 455;r 255 408 455 359 525;g 264 408 441 402 441;r 274 408 434 402 446;g 285 390 441 380 441;g 296 348 380 317 401;r 307 359 374 338 408;g 317 338 371 327 420;g 326 276 327 253 338;g 338 169 276 148 276;g 347 160 170 107 210;g 359 138 170 107 170;r 369 132 170 107 199;r 379 179 204;r 390 204 227 204 253;g 399 169 234 160 244;w 409 169 232;g 420 160 168 148 210;g 431 127 150 96 160;g 442 65 138 45 145;r 453 55 96;r 461 96 164 75 170;g 472 88 164;r 482 96 104 75 127;r 493 106 138 88 164;r 504 138 160 118 180;r 515 160 255 160 273;g 523 222 270 200 310;g 534 186 222 179 234;r 544 169 255;g 556 244 255 213 334;r 566 244 262 234 285;r 577 274 328 253 338;g 586 294 338 283 378;r 596 294 352 283 359;g 607 253 338 244 376;g 617 234 253 213 262;g 628 204 222 192 244;g 638 179 210 169 213;g 648 127 192 127 213;g 658 110 127 107 150;r 669 127 150 107 179;r 680 127 180 107 180;r 690 169 265 169 273;g 701 244 253 234 270;r 710 244 255 213 255;r 720 234 359;g 732 338 369;r 742 359 422 359 450;w 752 380 420;g 764 402 411 359 434;w 771 380 402;r 783 380 422 380 441;r 793 402 483;r 804 483 506 464 520;g 815 506 516 506 547;r 826 504 590 485 590;r 834 590 610 567 632;g 845 590 608 567 632;g 855 567 590;g 866 556 590 547 632;r 877 547 556;r 888 547 580 524 587;g 896 547 580 524 580;g 907 485 547 476 588;r 917 480 496 464 525;r 928 494 506;r 939 506 537 494 547;g 950 504 536 485 536;r 958 516 547 513 566;r 969 541 547 525 566;w 980 541 553;r 991 536 590;r 1002 577 683 577 692;r 1012 680 692 673 755;g 1020 632 704;g 1031 556 634 547 634;g 1042 420 547 411 547;g 1053 415 422 348 438;r 1064 415 438;g 1075 425 459 420 473;w 1082 380 422;r 1093 415 441;r 1104 420 438 402 438;r 1115 420 434 402 441;r 1125 420 515;r 1136 515 547 485 566;g 1145 494 547 464 588;g 1156 441 471 441 504;g 1167 359 455 338 462;r 1177 359 401 317 411;g 1188 317 401 213 401;r 1199 338 411 276 411;g 1207 390 402 359 420;g 1218 338 385;g 1229 192 338 179 338;r 1239 192 222 192 244;g 1250 230 234 192 244;g 1261 127 234 118 253;g 1270 118 127 107 164;r 1280 115 150 107 164;r 1291 150 159 127 210;w 1302 127 150;g 1312 138 143 127 164;r 1323 141 170 127 180',
  sma: '108,1165 135,1090 180,920 205,795 248,635 258,606 266,570 298,490 310,472 325,440 355,385 372,356 395,328 418,300 450,248 495,180 512,168 535,157 558,166 577,183 612,198 635,201 652,208 683,210 695,219 735,241 768,272 795,289 818,308 845,360 895,460 915,488 940,503 962,521 978,530 1010,560 1024,567 1034,566 1055,550 1077,538 1090,527 1117,513 1155,513 1165,508 1180,494 1202,473 1240,403 1262,380 1275,357 1325,295 1336,275',
  vwap: '108,1271 123,1264 135,1242 145,1231 170,1212 195,1199 205,1180 233,1158 265,1147 287,1142 310,1132 320,1122 340,1112 353,1103 385,1086 420,1072 455,1047 505,1022 517,1011 545,1004 600,985 635,980 720,963 735,955 800,947 905,932 980,928 1010,922 1060,917 1125,914 1170,908 1195,898 1220,896 1232,890 1270,884 1336,875' }
];

// Grid
const times = [[33,'15:00'],[159,'16:01'],[290,'17:06'],[351,'17:40'],[405,'18:06'],[485,'Thu'],[528,'4:07'],[581,'4:40'],[623,'5:00'],[727,'6:00'],[781,'6:15'],[834,'6:30'],[903,'7:00'],[953,'7:15'],[1003,'7:30'],[1107,'8:00'],[1153,'8:15'],[1206,'8:30'],[1264,'8:45'],[1321,'9:00'],[1379,'9:15'],[1436,'9:30'],[1494,'9:45'],[1552,'10:00'],[1609,'10:15'],[1667,'10:30'],[1724,'10:45'],[1782,'11:00']];
for (const [x, label] of times) {
  const day = label === 'Thu';
  add('price-grid', 'path', { d: `M${x + .5} 139v890`, stroke: day ? '#5c5c5c' : '#686868', 'stroke-dasharray': day ? '8 4' : '1 5' });
  add('price-grid', 'path', { d: `M${x + .5} 129v5M${x + .5} 1032v5`, stroke: '#686868' });
  add('volume-grid', 'path', { d: `M${x + .5} 1071v38`, stroke: '#5c5c5c', 'stroke-dasharray': '1 5' });
  add('volume-grid', 'path', { d: `M${x + .5} 1061v5M${x + .5} 1115v4`, stroke: '#686868' });
  add('time-labels', 'text', { x, y: 1133, class: 'ax' }, label);
}
for (let i = 0; i < 12; i++) {
  const y = Math.floor(171.75 + i * 74.64) + .5;
  add('price-grid', 'path', { d: `M26 ${y}H1826`, stroke: '#686868', 'stroke-dasharray': '1 5' });
  add('price-grid', 'path', { d: `M16 ${y}h5M1830 ${y}h5`, stroke: '#686868' });
  add('price-labels', 'text', { x: 1837, y: y + 4.5, class: 'ax' }, String(+(29.7 - i / 10).toFixed(1)));
}
for (const y of [1073.5, 1089.5, 1104.5]) add('volume-grid', 'path', { d: `M21 ${y}H1826`, stroke: '#5c5c5c', 'stroke-dasharray': '1 5' });
add('volume-grid', 'path', { d: 'M1830 1089.5h5', stroke: '#686868' });

// Candles
const box = (x, y, w, h, fill) => add('candles', 'rect', { x, y, width: w, height: Math.max(1, h), fill });
const lines = { sma: [], vwap: [] };
for (const s of segments) {
  const X = v => Math.floor(s.x + v / s.sx);
  const Y = v => Math.round(s.y + v / s.sy - .3);
  for (const rec of s.bars.split(';')) {
    const [t, ...raw] = rec.split(' ');
    const n = raw.map(Number);
    if (t === 'd') { for (const v of n.slice(1)) box(X(v) - 1, Y(n[0]), 3, 1, '#a8a8a8'); continue; }
    const x = X(n[0]), c = COLOR[t];
    if (t === 'w') { box(x, Y(n[1]), 1, Y(n[2]) - Y(n[1]), c); continue; }
    const top = Y(n[1]), bot = Y(n[2]), hi = Y(n[3] ?? n[1]), lo = Y(n[4] ?? n[2]);
    if (t === 'r') {
      box(x - 1, top, 3, bot - top, c);
      box(x, hi, 1, lo - hi, c);
    } else {
      box(x - 1, top, 1, bot - top, c); box(x + 1, top, 1, bot - top, c);
      box(x, top, 1, 1, c); box(x, bot - 1, 1, 1, c);
      if (hi < top) box(x, hi, 1, top - hi, c);
      if (lo > bot) box(x, bot, 1, lo - bot, c);
    }
  }
  for (const k in lines) for (const p of s[k].split(' ')) {
    const [a, b] = p.split(',');
    lines[k].push([(s.x + a / s.sx).toFixed(1), (s.y + b / s.sy).toFixed(1)]);
  }
}
const join = pts => pts.map(p => p.join()).join(' ');
add('overlays', 'polyline', { points: join(lines.vwap), fill: 'none', stroke: '#ff73dc', 'stroke-width': 1.4 });
add('overlays', 'polyline', { points: join(lines.sma), fill: 'none', stroke: '#0cd9dc', 'stroke-width': 1.2 });

// Volume: colour, x, top
const volume = [
 [0, 1020, 'g45 286 r55 290 r65 273 g74 261 g101 126 g178 294'],
 [640, 1020, 'r1390 171 c1400 240 g1410 270 g1420 249 r1429 267 g1437 252 r1446 249 g1456 275 r1467 249 r1476 285 g1486 273 r1493 228 g1503 272 g1513 274 r1523 273 r1532 282 g1542 275 g1550 270 c1560 267'],
 [1280, 980, 'r0 398 g11 402 g21 402 r30 399 g40 404 r48 408 g57 411 g67 410 g77 404 r87 400 g97 411 g104 408 g114 410 r124 410 r133 407 r143 408 g151 400 g160 380 r170 405 r180 407 g190 407 g199 390 g208 406 g217 393 r227 405 g236 378 r246 400 r256 405 g266 384 r273 396 g283 400 g293 408 g303 403 g312 408 c322 405 g329 387 r339 404 r349 401 g359 408 r368 408 r378 410 r387 406 g397 411 r405 414 r415 408 g424 405 g434 399 g444 410 g452 408 r462 412 g472 405 r481 410 r490 409 r500 412 g508 407 r518 409 g527 412 g538 402 g547 408 r557 410 r564 408 r574 413 r584 408 r594 408 r603 405 r611 402 g620 409 g630 408 g640 410 r650 413 g658 410 r667 412 g677 408 r687 408 g697 412 g706 413 g716 413 g734 413 r762 412 r772 410 r782 412 r800 408 r810 412 r820 411 r843 412 r876 408 c886 413 g912 402 g932 409 g952 412 g969 408 r1045 411 r1055 402 r1065 408 r1073 412 g1090 411 g1100 412 r1167 412 r1185 413 g1205 412 g1214 412 g1224 396 r1233 412 g1260 408 r1270 412 g1297 411 r1317 412']
];
for (const [ox, oy, text] of volume) {
  const f = text.split(' ');
  for (let i = 0; i < f.length; i += 2) {
    const x = Math.floor(ox + f[i].slice(1) / 2.45), y = Math.round(oy + f[i + 1] / 3);
    add('bars', 'rect', { x, y, width: 1, height: 1119 - y, fill: COLOR[f[i][0]] });
  }
}
const avg = (ox, oy, str) => str.split(' ').map(p => p.split(',')).map(([a, b]) => [(ox + a / 2.45).toFixed(1), (oy + b / 3).toFixed(1)]);
add('average', 'polyline', { points: join(avg(0, 1020, '38,292 75,290 82,288 90,291 100,290 103,283 168,283 178,286 228,286 245,290 262,290 283,293 289,297')), fill: 'none', stroke: '#f7e6a2', 'stroke-width': 1.2 });
add('average', 'polyline', { points: join(avg(640, 1020, '1390,296 1420,289 1440,284 1470,275 1510,268 1550,262').concat(avg(1280, 980, '0,381 20,387 50,391 70,396 100,402 150,405 200,407 230,405 250,403 290,401 340,400 370,403 410,403 440,406 490,409 520,412 560,411 600,409 660,409 690,411 770,412 800,415 1357,415'))), fill: 'none', stroke: '#f7e6a2', 'stroke-width': 1.2 });
```
